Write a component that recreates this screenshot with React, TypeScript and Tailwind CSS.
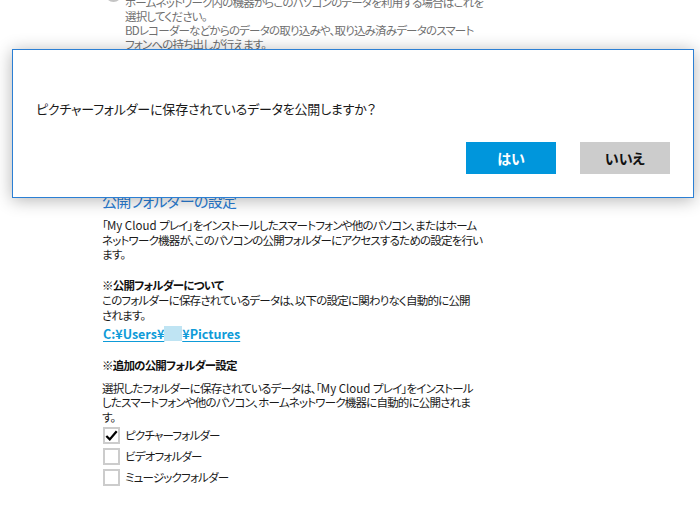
import React from "react";

const font = "font-['Noto_Sans_CJK_JP','Noto_Sans',sans-serif] [font-feature-settings:'palt']";

function Checkbox({ checked, label }: { checked?: boolean; label: string }) {
  return (
    <div className="flex items-center h-[21px]">
      <div className="w-[17px] h-[17px] ml-[1px] border-2 border-[#cccccc] bg-white flex items-center justify-center">
        {checked && (
          <svg width="15" height="13" viewBox="0 0 15 13">
            <path d="M1.5 7 L5.5 11 L13.5 1.5" fill="none" stroke="#000" strokeWidth="2.6" />
          </svg>
        )}
      </div>
      <span className="ml-[5px] text-[11.5px] tracking-[-0.8px] text-[#1a1a1a]">{label}</span>
    </div>
  );
}

function MyCloud() {
  return <span className="tracking-normal">My Cloud </span>;
}

export default function App() {
  return (
    <div className={`relative w-[700px] h-[510px] overflow-hidden bg-white ${font}`}>
      <div className="pl-[102px]">
        {/* top radio option (partially scrolled out) */}
        <div className="flex -mt-[5px]">
          <div className="w-[17px] h-[17px] -mt-[10px] ml-[3px] rounded-full border-2 border-[#c4c4c4] shrink-0" />
          <div className="ml-[3px] text-[11.5px] tracking-[-0.8px] leading-[14px] text-[#707070] whitespace-nowrap">
            ホームネットワーク内の機器からこのパソコンのデータを利用する場合はこれを
            <br />
            選択してください。
            <br />
            BDレコーダーなどからのデータの取り込みや、取り込み済みデータのスマート
            <br />
            フォンへの持ち出しが行えます。
          </div>
        </div>

        <div className="mt-[140px] text-[15px] tracking-[-0.7px] leading-[20px] text-[#2a7dd4] whitespace-nowrap">
          公開フォルダーの設定
        </div>

        <div className="mt-[7px] text-[11.5px] tracking-[-0.8px] leading-[14.5px] text-[#1a1a1a] whitespace-nowrap">
          「<MyCloud />プレイ」をインストールしたスマートフォンや他のパソコン、またはホーム
          <br />
          ネットワーク機器が、このパソコンの公開フォルダーにアクセスするための設定を行い
          <br />
          ます。
        </div>

        <div className="mt-[16px] text-[11.5px] tracking-[-0.8px] leading-[15px] font-bold text-[#111]">
          ※公開フォルダーについて
        </div>
        <div className="text-[11.5px] tracking-[-0.8px] leading-[15px] text-[#1a1a1a] whitespace-nowrap">
          このフォルダーに保存されているデータは、以下の設定に関わりなく自動的に公開
          <br />
          されます。
        </div>
        <div className="mt-[3px] text-[12.5px] leading-[15px] font-bold text-[#0e9bd8] underline underline-offset-2 whitespace-nowrap flex items-center">
          <span className="ml-[1px]">C:¥Users¥</span>
          <span className="inline-block w-[18px] h-[15px] bg-[#bfe4f3]" />
          <span>¥Pictures</span>
        </div>

        <div className="mt-[17px] text-[11.5px] tracking-[-0.8px] leading-[15px] font-bold text-[#111]">
          ※追加の公開フォルダー設定
        </div>
        <div className="mt-[8px] text-[11.5px] tracking-[-0.8px] leading-[14.5px] text-[#1a1a1a] whitespace-nowrap">
          選択したフォルダーに保存されているデータは、「<MyCloud />プレイ」をインストール
          <br />
          したスマートフォンや他のパソコン、ホームネットワーク機器に自動的に公開されま
          <br />
          す。
        </div>
        <div className="mt-[1px] flex flex-col">
          <Checkbox checked label="ピクチャーフォルダー" />
          <Checkbox label="ビデオフォルダー" />
          <Checkbox label="ミュージックフォルダー" />
        </div>
      </div>

      {/* dialog overlay */}
      <div className="absolute left-[12px] top-[49px] w-[682px] h-[149px] bg-white border border-[#2b7fd4] shadow-[0_2px_16px_rgba(0,0,0,0.3)] flex flex-col">
        <div className="pt-[49px] pl-[23px] text-[13px] tracking-[-0.2px] leading-[20px] text-[#1a1a1a] whitespace-nowrap">
          ピクチャーフォルダーに保存されているデータを公開しますか？
        </div>
        <div className="mt-[23px] flex justify-end gap-[24px] pr-[23px]">
          <button className="w-[90px] h-[32px] bg-[#0096dc] text-white text-[14px] font-bold">
            はい
          </button>
          <button className="w-[90px] h-[32px] bg-[#cccccc] text-[#111] text-[14px] font-bold">
            いいえ
          </button>
        </div>
      </div>
    </div>
  );
}
